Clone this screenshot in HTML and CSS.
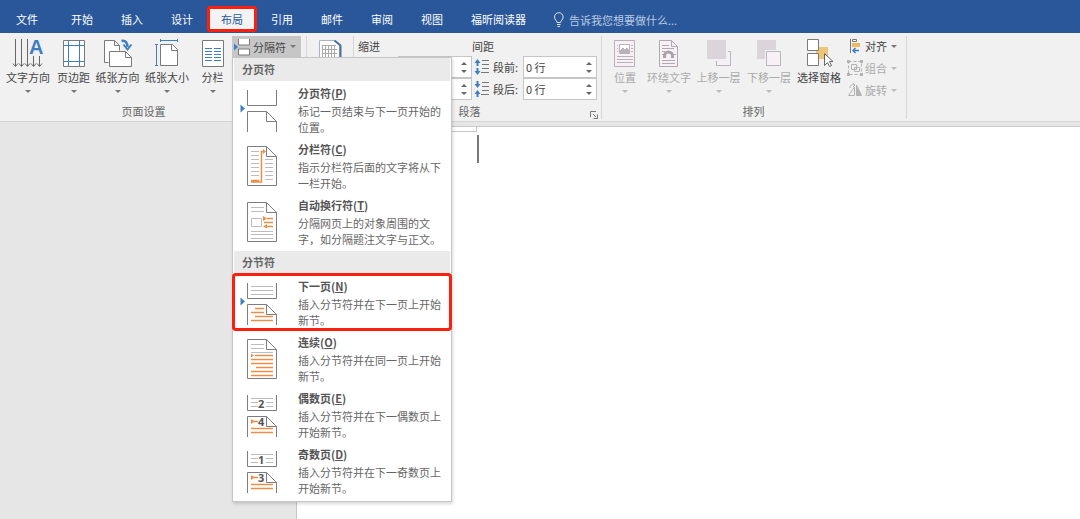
FILE: index.html
```html
<!DOCTYPE html>
<html lang="zh-CN">
<head>
<meta charset="utf-8">
<title>布局</title>
<link rel="stylesheet" href="styles.css">
</head>
<body>
<header class="tabbar">
  <nav class="tabs">
    <button class="tab tab-file" type="button">文件</button>
    <button class="tab" type="button">开始</button>
    <button class="tab" type="button">插入</button>
    <button class="tab" type="button">设计</button>
    <button class="tab tab-active" type="button">布局</button>
    <button class="tab" type="button">引用</button>
    <button class="tab" type="button">邮件</button>
    <button class="tab" type="button">审阅</button>
    <button class="tab" type="button">视图</button>
    <button class="tab" type="button">福昕阅读器</button>
  </nav>
  <label class="tellme">
    <svg width="12" height="16" viewBox="0 0 12 16" fill="none" stroke="#dbe5f3"><path d="M4 10.500C4 8.500 1.500 8 1.500 5a4.300 4.300 0 0 1 8.600 0C10.100 8 7.600 8.500 7.600 10.500z"/><path d="M4 12.500h3.600M4.500 14.500h2.600"/></svg>
    <input type="text" aria-label="告诉我您想要做什么" placeholder="告诉我您想要做什么...">
  </label>
</header>

<section class="ribbon">
  <div class="group group-setup">
    <div class="tools tools-setup">
      <button class="big" type="button">
        <svg width="32" height="30" viewBox="0 0 32 30" fill="none" stroke="#666"><path d="M3.500 1v27M9.500 1v27M15.500 1v27M21.500 18v10M27.500 18v10"/><path d="M1 25.500l2.500 3 2.500-3M7 25.500l2.500 3 2.500-3M13 25.500l2.500 3 2.500-3M19 25.500l2.500 3 2.500-3M25 25.500l2.500 3 2.500-3"/><text class="letter-a" x="17" y="16">A</text></svg>
        <span>文字方向</span><i class="caret"></i>
      </button>
      <button class="big" type="button">
        <svg width="24" height="30" viewBox="0 0 24 30" fill="none"><path d="M1.500 2.500h21v26h-21z" fill="#fff" stroke="#7a7a7a"/><path d="M6.500 3v25M17.500 3v25M2 7.500h20M2 23.500h20" stroke="#3f7fc1"/></svg>
        <span>页边距</span><i class="caret"></i>
      </button>
      <button class="big" type="button">
        <svg width="30" height="30" viewBox="0 0 30 30" fill="none"><path d="M5.500 24.500h-4v-22h10l5 5v5" fill="#fff" stroke="#7a7a7a"/><path d="M11.500 2.500v5h5" stroke="#7a7a7a"/><path d="M6.500 13.500h16l6 6v9h-22z" fill="#fff" stroke="#7a7a7a"/><path d="M22.500 13.500v6h6" stroke="#7a7a7a"/><path d="M18.500 3c4-1 6 2 6 6" stroke="#3f7fc1" stroke-width="2.500"/><path d="M20.500 6.500l4 5 4-5" stroke="#3f7fc1" stroke-width="2"/></svg>
        <span>纸张方向</span><i class="caret"></i>
      </button>
      <button class="big" type="button">
        <svg width="24" height="30" viewBox="0 0 24 30" fill="none"><path d="M5.500 6.500h12l5 5v16h-17z" fill="#fff" stroke="#7a7a7a"/><path d="M16.500 6.500v6h6" stroke="#7a7a7a"/><path d="M5 2.500h18M5.500 1v3M22.500 1v3M1.500 6v22M0 6.500h3M0 27.500h3" stroke="#3f7fc1"/></svg>
        <span>纸张大小</span><i class="caret"></i>
      </button>
      <button class="big" type="button">
        <svg width="24" height="30" viewBox="0 0 24 30" fill="none"><path d="M1.500 2.500h21v26h-21z" fill="#fff" stroke="#7a7a7a"/><path d="M4 10.500h7M4 13.500h7M4 16.500h7M4 19.500h7M4 22.500h7M13 10.500h7M13 13.500h7M13 16.500h7M13 19.500h7M13 22.500h7" stroke="#3f7fc1"/></svg>
        <span>分栏</span><i class="caret"></i>
      </button>
      <div class="breaks">
        <button class="breaks-button" type="button" aria-expanded="true">
          <svg width="18" height="18" viewBox="0 0 18 18"><path d="M1 5.500l4 3.500-4 3.500z" fill="#3f7fc1"/><path d="M5.500 1v6h11V1M5.500 17v-6h11v6z" fill="#fff" stroke="#7a7a7a"/></svg>
          <span>分隔符</span><i class="caret"></i>
        </button>
        <div class="menu" role="menu">
          <h2 class="menu-head">分页符</h2>
          <button class="item" type="button" role="menuitem">
            <svg class="item-icon" viewBox="0 0 40 44"><path class="tri" d="M1.500 16.500l4.500 4-4.500 4z"/><path class="pg" d="M8.500 2v15.500h29V2M8.500 44V23.500h19l10 10V44M27.500 23.500v10h10"/></svg>
            <span class="item-text"><b>分页符(<u>P</u>)</b><span>标记一页结束与下一页开始的<br>位置。</span></span>
          </button>
          <button class="item" type="button" role="menuitem">
            <svg class="item-icon" viewBox="0 0 40 44"><path class="pg" d="M8.500 2.500h19l10 10v29h-29zM27.500 2.500v10h10"/><path class="gl" d="M12 7.500h8M12 11.500h8M12 15.500h8M12 19.500h8M12 23.500h8M12 27.500h8M12 31.500h8M26 15.500h8M26 19.500h8M26 23.500h8M26 27.500h8M26 31.500h8M26 35.500h8"/><path class="ol" d="M12 36.500h8M12 38h10.500V7.500H25"/><path class="of" d="M24 5l3 2.500-3 2.500z"/></svg>
            <span class="item-text"><b>分栏符(<u>C</u>)</b><span>指示分栏符后面的文字将从下<br>一栏开始。</span></span>
          </button>
          <button class="item" type="button" role="menuitem">
            <svg class="item-icon" viewBox="0 0 40 44"><path class="pg" d="M8.500 2.500h19l10 10v29h-29zM27.500 2.500v10h10"/><path class="gl" d="M12 7.500h13M12 11.500h13M12 31.500h22M12 34.500h22M12 38.500h22M12.500 18.500h10v8h-10z"/><path class="ol" d="M28 18.500h6M25 22.500h9M28 26.500h6"/><path class="of" d="M24 16l4 2.500-4 2.500zM28 24l-4 2.500 4 2z"/></svg>
            <span class="item-text"><b>自动换行符(<u>T</u>)</b><span>分隔网页上的对象周围的文<br>字，如分隔题注文字与正文。</span></span>
          </button>
          <h2 class="menu-head menu-head-next">分节符</h2>
          <button class="item item-marked" type="button" role="menuitem">
            <svg class="item-icon" viewBox="0 0 40 44"><path class="tri" d="M1.500 16.500l4.500 4-4.500 4z"/><path class="pg" d="M8.500 2v15.500h29V2M8.500 44V23.500h19l10 10V44M27.500 23.500v10h10"/><path class="gl" d="M12 5.500h22M12 9.500h22M12 13.500h22"/><path class="ol" d="M16 27.500h9M12 31.500h13M16 35.500h18M12 39.500h22"/></svg>
            <span class="item-text"><b>下一页(<u>N</u>)</b><span>插入分节符并在下一页上开始<br>新节。</span></span>
          </button>
          <button class="item" type="button" role="menuitem">
            <svg class="item-icon" viewBox="0 0 40 44"><path class="pg" d="M8.500 2.500h19l10 10v29h-29zM27.500 2.500v10h10"/><path class="gl" d="M12 7.500h13M12 11.500h13M12 15.500h22"/><path class="ol" d="M16 18.500h18M12 22.500h22M12 26.500h22M17 30.500h17M12 34.500h22M12 38.500h22"/><path class="of" d="M12 16.500l3 2-3 2z"/></svg>
            <span class="item-text"><b>连续(<u>O</u>)</b><span>插入分节符并在同一页上开始<br>新节。</span></span>
          </button>
          <button class="item" type="button" role="menuitem">
            <svg class="item-icon" viewBox="0 0 40 44"><path class="pg" d="M8.500 2v15.500h29V2M8.500 44V23.500h19l10 10V44M27.500 23.500v10h10"/><path class="gl" d="M12 5.500h22M12 9.500h7M27 9.500h7M12 13.500h7M27 13.500h7"/><path class="ol" d="M15 28.500h4M12 35.500h22M12 39.500h22"/><path class="of" d="M12 26l4 2.500-4 2.500z"/><text class="digit" x="19" y="15">2</text><text class="digit" x="19" y="33">4</text></svg>
            <span class="item-text"><b>偶数页(<u>E</u>)</b><span>插入分节符并在下一偶数页上<br>开始新节。</span></span>
          </button>
          <button class="item" type="button" role="menuitem">
            <svg class="item-icon" viewBox="0 0 40 44"><path class="pg" d="M8.500 2v15.500h29V2M8.500 44V23.500h19l10 10V44M27.500 23.500v10h10"/><path class="gl" d="M12 5.500h22M12 9.500h7M27 9.500h7M12 13.500h7M27 13.500h7"/><path class="ol" d="M15 28.500h4M12 35.500h22M12 39.500h22"/><path class="of" d="M12 26l4 2.500-4 2.500z"/><text class="digit" x="19" y="15">1</text><text class="digit" x="19" y="33">3</text></svg>
            <span class="item-text"><b>奇数页(<u>D</u>)</b><span>插入分节符并在下一奇数页上<br>开始新节。</span></span>
          </button>
        </div>
      </div>
    </div>
    <div class="group-name">页面设置</div>
  </div>

  <div class="group group-grid">
    <button class="big" type="button" aria-label="稿纸">
      <svg width="24" height="30" viewBox="0 0 24 30" fill="none"><path d="M1.500 2.500h15l5 5v21h-20z" fill="#fff" stroke="#a5b4c6"/><path d="M16.500 2.500l6 5v21" stroke="#4d6f9f" stroke-width="2"/><path d="M4 7.500h14M4 11.500h15M4 15.500h15M4 19.500h15M4.500 7v14M7.500 7v14M10.500 7v14M13.500 7v14M16.500 7v14" stroke="#a9a9a9"/></svg>
    </button>
  </div>

  <div class="group group-para">
    <div class="para">
      <div class="para-head">缩进</div>
      <div class="para-head para-head-gap">间距</div>
      <div class="spin"><input type="text" aria-label="左缩进"><span class="arrows"><button type="button" class="up" aria-label="增加左缩进"></button><button type="button" class="down" aria-label="减少左缩进"></button></span></div>
      <label class="para-label" for="before">
        <svg width="16" height="16" viewBox="0 0 16 16"><path d="M3.500 0L6.500 4H4.500v3h-2V4h-2zM3.500 16L6.500 12H4.500V9h-2v3h-2z" fill="#3f7fc1"/><path d="M8 1.500h7M8 5.500h7M8 9.500h7M7 13.500h8" stroke="#777"/></svg>段前:</label>
      <div class="spin"><input type="text" id="before" value="0 行"><span class="arrows"><button type="button" class="up" aria-label="增加段前"></button><button type="button" class="down" aria-label="减少段前"></button></span></div>
      <div class="spin"><input type="text" aria-label="右缩进"><span class="arrows"><button type="button" class="up" aria-label="增加右缩进"></button><button type="button" class="down" aria-label="减少右缩进"></button></span></div>
      <label class="para-label" for="after">
        <svg width="16" height="16" viewBox="0 0 16 16"><path d="M3.500 7L6.500 3H4.500V0h-2v3h-2zM3.500 9L6.500 13H4.500v3h-2v-3h-2z" fill="#3f7fc1"/><path d="M8 1.500h7M8 5.500h7M8 9.500h7M7 13.500h8" stroke="#777"/></svg>段后:</label>
      <div class="spin"><input type="text" id="after" value="0 行"><span class="arrows"><button type="button" class="up" aria-label="增加段后"></button><button type="button" class="down" aria-label="减少段后"></button></span></div>
    </div>
    <div class="group-name">段落</div>
    <button class="launcher" type="button" aria-label="段落设置"><svg width="8" height="8" viewBox="0 0 8 8" fill="none" stroke="#777"><path d="M.5 6V.5H6M3 3l3 3M7.500 3.500v4h-4"/></svg></button>
  </div>

  <div class="group group-arrange">
    <div class="tools tools-arrange">
      <button class="big off" type="button" disabled>
        <svg width="24" height="30" viewBox="0 0 24 30" fill="none" stroke="#b9b0b9"><path d="M1.500 2.500h20v26h-20z" fill="#f7f0f7"/><path d="M6.500 6.500h10v9h-10z" fill="#fff"/><path d="M7 15v-2l3-3 2 2 2-2 2 3v2z" fill="#b9b0b9"/><path d="M4 7.500h1M4 10.500h1M4 13.500h1M18 7.500h2M18 10.500h2M18 13.500h2M4 18.500h16M4 21.500h16M4 24.500h16"/></svg>
        <span>位置</span><i class="caret"></i>
      </button>
      <button class="big off" type="button" disabled>
        <svg width="24" height="30" viewBox="0 0 24 30" fill="none" stroke="#b0a9b0"><path d="M2.500 2.500h12l6 6v20h-18z" fill="#f7f0f7"/><path d="M14.500 2.500v6h6M5 7.500h7M5 10.500h12M5 13.500h3M5 16.500h2M16 16.500h3M5 22.500h13M5 25.500h13"/><path d="M7.500 20v-2a4 4 0 0 1 8 0v2" stroke-width="3" stroke="#aaa3aa"/></svg>
        <span>环绕文字</span><i class="caret"></i>
      </button>
      <button class="big off" type="button" disabled>
        <svg width="26" height="30" viewBox="0 0 26 30"><path d="M10.500 13.500h14v14h-14z" fill="#f7f0f7" stroke="#bbb3bb"/><path d="M0 1h22v22H0z" fill="#f1f1f1"/><path d="M1 2h19v19H1z" fill="#dbd5db"/></svg>
        <span>上移一层</span><i class="caret"></i>
      </button>
      <button class="big off" type="button" disabled>
        <svg width="26" height="30" viewBox="0 0 26 30"><path d="M1 2h19v19H1z" fill="#dbd5db"/><path d="M9 12h17v17H9z" fill="#f1f1f1"/><path d="M10.500 13.500h14v14h-14z" fill="#f7f0f7" stroke="#bbb3bb"/></svg>
        <span>下移一层</span><i class="caret"></i>
      </button>
      <button class="big" type="button">
        <svg width="26" height="30" viewBox="0 0 26 30"><path d="M10 9h12v12H10z" fill="#f0c478"/><path d="M1.500 1.500h11v11h-11zM1.500 15.500h11v12h-11z" fill="#fff" stroke="#7a7a7a"/><path d="M18.500 15.500v12l3-3 2 4 2-1-2-4h3.500z" fill="#fff" stroke="#666"/></svg>
        <span>选择窗格</span>
      </button>
      <div class="small-tools">
        <button class="small" type="button">
          <svg width="16" height="16" viewBox="0 0 16 16"><path d="M3.500 1v14" stroke="#777"/><path d="M5.500 1.500h4v2h-4z" fill="#fff" stroke="#777"/><path d="M5 5h8v4H5z" fill="#f0b860"/><path d="M12 12.500H6M8.500 10L6 12.500 8.500 15" fill="none" stroke="#3f7fc1" stroke-width="1.500"/></svg>
          <span>对齐</span><i class="caret"></i>
        </button>
        <button class="small off" type="button" disabled>
          <svg width="16" height="16" viewBox="0 0 16 16" fill="none" stroke="#b3b3b3"><path d="M1.500 1.500h13v13h-13z" stroke-dasharray="3 2"/><path d="M4.500 4.500h5v5h-5zM7.500 7.500h5v4h-5z"/><path d="M0 0h3v3H0zM13 0h3v3h-3zM0 13h3v3H0zM13 13h3v3h-3z" fill="#b3b3b3" stroke="none"/></svg>
          <span>组合</span><i class="caret"></i>
        </button>
        <button class="small off" type="button" disabled>
          <svg width="16" height="16" viewBox="0 0 16 16" fill="none" stroke="#b3b3b3"><path d="M7.500 5v8.500h-6zM3 6c0-3 2-4 4-3M6 1l2 2-2 2"/><path d="M9.500 3v10.500h5z" fill="#b3b3b3"/></svg>
          <span>旋转</span><i class="caret"></i>
        </button>
      </div>
    </div>
    <div class="group-name">排列</div>
  </div>
</section>

<main class="workspace">
  <div class="page">
    <div class="header-mark"></div>
    <div class="cursor"></div>
  </div>
</main>
</body>
</html>
```

FILE: styles.css
```css
* { box-sizing: border-box; }
html, body { height: 100%; }
body {
  margin: 0;
  display: flex;
  flex-direction: column;
  overflow: hidden;
  background: #e6e6e6;
  color: #444;
  font: 11px/16px "Noto Sans CJK SC", sans-serif;
}
button, input {
  font: inherit;
  color: inherit;
  margin: 0;
  padding: 0;
  border: 0;
  background: none;
  white-space: nowrap;
}
svg { display: block; flex: none; overflow: visible; }

.tabbar {
  flex: none;
  display: flex;
  height: 33px;
  padding: 6px 0 1px;
  background: #2a579a;
  color: #fff;
}
.tabs { display: flex; }
.tab { padding: 0 14px; }
.tab-file { padding: 0 19px 0 16px; }
.tab-active {
  border: 3px solid #f9200f;
  border-radius: 3px;
  padding: 0 11px;
  background: #f3f3f3;
  color: #2a579a;
}
.tellme {
  display: flex;
  align-items: center;
  gap: 4px;
  margin-left: 13px;
  padding-top: 1px;
  color: #b9cae3;
}
.tellme input { width: 160px; outline: 0; }
.tellme input::placeholder { color: #b9cae3; opacity: 1; }

.ribbon {
  flex: none;
  display: flex;
  height: 89px;
  padding: 3px 0 2px;
  background: #f1f1f1;
  border-bottom: 1px solid #d4d4d4;
}
.group {
  position: relative;
  display: flex;
  flex-direction: column;
  justify-content: space-between;
  border-right: 1px solid #d6d6d6;
}
.group-setup { width: 307px; padding-left: 3px; }
.group-grid { width: 47px; align-items: center; }
.group-para { width: 248px; padding-left: 4px; }
.group-arrange { width: 305px; padding-left: 3px; }
.group-name { padding-right: 4px; text-align: center; color: #666; }
.group-setup .group-name { padding-right: 22px; }
.group-para .group-name { padding-right: 20px; }
.tools { display: grid; align-items: start; }
.tools-setup { grid-template-columns: 50px 41px 47px 52px 39px 1fr; }
.tools-arrange { grid-template-columns: 40px 48px 51px 50px 50px 1fr; }
.big {
  display: flex;
  flex-direction: column;
  align-items: center;
  padding-top: 2px;
}
.big span { margin-top: 1px; }
.big .caret { margin-top: 5px; }
.caret {
  width: 0;
  height: 0;
  border: 3px solid transparent;
  border-top-color: #777;
  border-bottom: 0;
}
.off { color: #aaa; }
.off .caret { border-top-color: #bbb; }
.letter-a { font: bold 20px "Liberation Sans", sans-serif; fill: #3f7fc1; stroke: none; }

.breaks { position: relative; justify-self: start; }
.breaks-button {
  display: flex;
  align-items: center;
  gap: 2px;
  height: 21px;
  width: 69px;
  padding-left: 1px;
  background: #c6c6c6;
}
.breaks-button .caret { margin-left: 2px; }
.menu {
  position: absolute;
  z-index: 2;
  top: 21px;
  left: 0;
  width: 220px;
  padding-bottom: 3px;
  background: #fff;
  border: 1px solid #c6c6c6;
  box-shadow: 1px 2px 3px rgba(0, 0, 0, .15);
}
.menu-head {
  margin: 0 1px;
  padding-left: 8px;
  font-size: 11px;
  line-height: 23px;
  background: #eaeaea;
  color: #666;
}
.menu-head-next { margin-top: 2px; }
.item {
  display: flex;
  width: 100%;
  height: 56px;
  padding: 4px 0 2px 6px;
  text-align: left;
}
.item-marked {
  outline: 3px solid #f9200f;
  outline-offset: -2px;
  border-radius: 3px;
}
.item-icon { width: 40px; height: 44px; margin: 3px 19px 0 0; }
.item-text b { display: block; margin-bottom: 2px; color: #555; }
.item-text > span { display: block; color: #666; }
.pg { fill: none; stroke: #7d7d7d; }
.gl { fill: none; stroke: #bdbdbd; }
.ol { fill: none; stroke: #ea8f4a; stroke-width: 1.5; }
.of { fill: #ea8f4a; }
.tri { fill: #3f7fc1; }
.digit { font: bold 11px "Open Sans", sans-serif; fill: #555; }

.para {
  display: grid;
  grid-template-columns: 114px 51px 74px;
  grid-template-rows: 20px 22px 22px;
  align-items: center;
}
.para-head-gap { grid-column: 2 / 4; }
.spin {
  display: flex;
  justify-content: space-between;
  justify-self: end;
  width: 74px;
  height: 22px;
  background: #fff;
  border: 1px solid #c6c6c6;
}
.spin input { width: 50px; padding-left: 2px; }
.arrows {
  display: flex;
  flex-direction: column;
  justify-content: space-around;
  padding: 2px 4px;
}
.up, .down { width: 0; height: 0; border: 3px solid transparent; }
.up { border-top: 0; border-bottom-color: #666; }
.down { border-bottom: 0; border-top-color: #666; }
.para-label { display: flex; align-items: center; gap: 3px; padding-left: 2px; }
.launcher { position: absolute; right: 3px; bottom: 0; }

.small-tools { display: flex; flex-direction: column; padding-left: 3px; }
.small { display: flex; align-items: center; gap: 2px; height: 22px; padding-bottom: 2px; }
.small .caret { margin-left: 2px; }

.workspace { flex: 1; display: flex; padding: 4px 0 0 296px; }
.page {
  flex: 1;
  background: #fff;
  border: solid #c6c6c6;
  border-width: 1px 0 0 1px;
}
.header-mark {
  width: 180px;
  height: 5px;
  border: solid #c6c6c6;
  border-width: 0 1px 1px 0;
}
.cursor { width: 2px; height: 28px; margin: 3px 0 0 180px; background: #777; }
```
